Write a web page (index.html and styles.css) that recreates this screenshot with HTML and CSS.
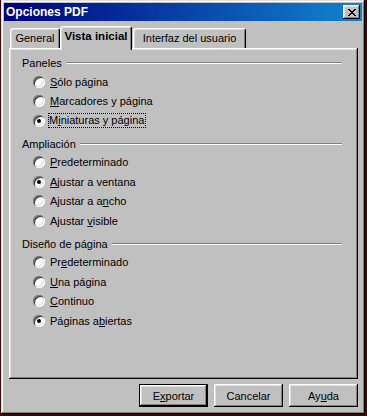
FILE: index.html
```html
<!DOCTYPE html>
<html lang="es">
<head>
    <meta charset="UTF-8">
    <title>Opciones PDF</title>
    <link rel="stylesheet" href="styles.css">
</head>
<body>
    <div class="window">
        <div class="titlebar">
            <span class="title">Opciones PDF</span>
            <button class="close" aria-label="Cerrar">
                <svg width="8" height="7" viewBox="0 0 8 7" shape-rendering="crispEdges">
                    <path d="M0 0h2v1h1v1h2v-1h1v-1h2v1h-1v1h-1v1h-1v1h1v1h1v1h1v1h-2v-1h-1v-1h-2v1h-1v1h-2v-1h1v-1h1v-1h1v-1h-1v-1h-1v-1h-1z" fill="#000"/>
                </svg>
            </button>
        </div>

        <div class="tabs">
            <div class="tab tab-general">General</div>
            <div class="tab tab-active">Vista inicial</div>
            <div class="tab tab-ui">Interfaz del usuario</div>
        </div>

        <div class="panel">
            <div class="group">
                <div class="group-head"><span>Paneles</span><i class="rule"></i></div>
                <label class="option"><span class="radio"></span><span class="text"><u>S</u>ólo página</span></label>
                <label class="option"><span class="radio"></span><span class="text"><u>M</u>arcadores y página</span></label>
                <label class="option"><span class="radio checked"></span><span class="text focus">M<u>i</u>niaturas y página</span></label>
            </div>

            <div class="group">
                <div class="group-head"><span>Ampliación</span><i class="rule"></i></div>
                <label class="option"><span class="radio"></span><span class="text"><u>P</u>redeterminado</span></label>
                <label class="option"><span class="radio checked"></span><span class="text"><u>A</u>justar a ventana</span></label>
                <label class="option"><span class="radio"></span><span class="text">Ajustar a a<u>n</u>cho</span></label>
                <label class="option"><span class="radio"></span><span class="text">Ajustar <u>v</u>isible</span></label>
            </div>

            <div class="group">
                <div class="group-head"><span>Diseño de página</span><i class="rule"></i></div>
                <label class="option"><span class="radio"></span><span class="text">Pr<u>e</u>determinado</span></label>
                <label class="option"><span class="radio"></span><span class="text"><u>U</u>na página</span></label>
                <label class="option"><span class="radio"></span><span class="text"><u>C</u>ontinuo</span></label>
                <label class="option"><span class="radio checked"></span><span class="text">Páginas a<u>b</u>iertas</span></label>
            </div>
        </div>

        <div class="buttons">
            <button class="btn btn-default">E<u>x</u>portar</button>
            <button class="btn">Cancelar</button>
            <button class="btn">Ay<u>u</u>da</button>
        </div>
    </div>
</body>
</html>
```

FILE: styles.css
```css
body {
    margin: 0;
    background-color: #3a0a0a;
    font-family: "Liberation Sans", Arial, sans-serif;
    font-size: 11px;
    color: #000;
}

.window {
    box-sizing: border-box;
    width: 364px;
    height: 414px;
    margin-left: 1px;
    padding: 3px;
    background-color: #c0c0c0;
    box-shadow: inset -1px -1px #000, inset 1px 1px #dfdfdf,
                inset -2px -2px #808080, inset 2px 2px #fff;
    display: flex;
    flex-direction: column;
}

.titlebar {
    height: 18px;
    padding: 0 2px 0 2px;
    display: flex;
    align-items: center;
    justify-content: space-between;
    background: linear-gradient(to right, #000080, #1084d0);
}

.title {
    color: #fff;
    font-weight: bold;
    font-size: 12px;
}

.close {
    box-sizing: border-box;
    width: 17px;
    height: 14px;
    padding: 0;
    border: 0;
    background-color: #c0c0c0;
    box-shadow: inset -1px -1px #000, inset 1px 1px #fff,
                inset -2px -2px #808080, inset 2px 2px #dfdfdf;
    display: flex;
    align-items: center;
    justify-content: center;
}

.close svg {
    display: block;
}

.tabs {
    margin-top: 5px;
    padding-left: 6px;
    height: 22px;
    display: flex;
    align-items: flex-end;
}

.tab {
    box-sizing: border-box;
    height: 20px;
    padding-top: 3px;
    text-align: center;
    border-style: solid;
    border-width: 1px 1px 0 1px;
    border-color: #fff #000 #c0c0c0 #fff;
    border-radius: 3px 3px 0 0;
    box-shadow: inset 1px 1px #dfdfdf, inset -1px 0 #808080;
    background-color: #c0c0c0;
}

.tab-general {
    width: 50px;
}

.tab-active {
    position: relative;
    z-index: 1;
    width: 72px;
    height: 24px;
    margin-bottom: -2px;
    padding-top: 3px;
    font-weight: bold;
    font-size: 11.5px;
}

.tab-ui {
    width: 113px;
    margin-left: 1px;
}

.panel {
    box-sizing: border-box;
    width: 349px;
    height: 331px;
    margin-left: 5px;
    padding: 7px 16px 0 13px;
    box-shadow: inset -1px -1px #000, inset 1px 1px #fff,
                inset -2px -2px #808080, inset 2px 2px #dfdfdf;
}

.group {
    margin-bottom: 5px;
}

.group-head {
    height: 16px;
    margin-bottom: 1px;
    display: flex;
    align-items: center;
}

.rule {
    flex: 1;
    height: 0;
    margin-left: 4px;
    border-top: 1px solid #808080;
    border-bottom: 1px solid #fff;
}

.option {
    height: 19.5px;
    padding-left: 11px;
    display: flex;
    align-items: center;
}

.radio {
    position: relative;
    width: 12px;
    height: 12px;
    margin-right: 5px;
    border-radius: 50%;
    background-color: #fff;
    box-shadow: inset 1px 1px #808080, inset -1px -1px #fff,
                inset 2px 2px #404040, inset -2px -2px #dfdfdf;
    flex: none;
}

.radio.checked::after {
    content: "";
    position: absolute;
    left: 4px;
    top: 4px;
    width: 4px;
    height: 4px;
    border-radius: 50%;
    background-color: #000;
}

.text.focus {
    margin-left: -1px;
    padding: 0 1px 1px 0;
    outline: 1px dotted #000;
}

.buttons {
    margin-top: 5px;
    padding-right: 4px;
    display: flex;
    justify-content: flex-end;
    gap: 6px;
}

.btn {
    box-sizing: border-box;
    width: 69px;
    height: 23px;
    padding: 0;
    border: 0;
    font-family: inherit;
    font-size: 11px;
    color: #000;
    background-color: #c0c0c0;
    box-shadow: inset -1px -1px #000, inset 1px 1px #fff,
                inset -2px -2px #808080, inset 2px 2px #dfdfdf;
}

.btn-default {
    border: 1px solid #000;
    box-shadow: inset -1px -1px #000, inset 1px 1px #fff,
                inset -2px -2px #808080, inset 2px 2px #dfdfdf;
}
```
